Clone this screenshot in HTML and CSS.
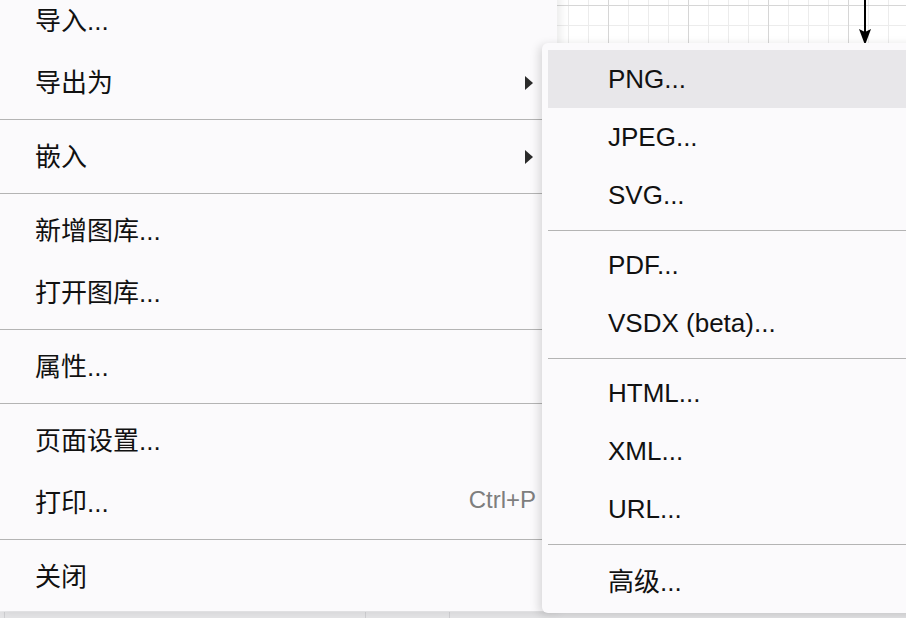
FILE: index.html
```html
<!DOCTYPE html>
<html lang="zh-CN">
<head>
<meta charset="utf-8">
<title>导出为</title>
<link rel="stylesheet" href="styles.css">
</head>
<body>
<div class="page">
  <div class="menu">
    <div class="item">导入...</div>
    <div class="item">导出为<span class="sub-arrow"></span></div>
    <div class="sep"></div>
    <div class="item">嵌入<span class="sub-arrow"></span></div>
    <div class="sep"></div>
    <div class="item">新增图库...</div>
    <div class="item">打开图库...</div>
    <div class="sep"></div>
    <div class="item">属性...</div>
    <div class="sep"></div>
    <div class="item">页面设置...</div>
    <div class="item">打印...<span class="shortcut">Ctrl+P</span></div>
    <div class="sep"></div>
    <div class="item">关闭</div>
  </div>
  <div class="footer">
    <div class="tab tab-a"></div>
    <div class="tab tab-b"></div>
    <div class="tab tab-c"></div>
  </div>
</div>

<svg class="edge-arrow" width="16" height="46" viewBox="0 0 16 46" aria-hidden="true">
  <line x1="7" y1="0" x2="7" y2="32" stroke="#000" stroke-width="2"/>
  <path d="M1 29 L7 45 L13 29 L7 32 Z" fill="#000"/>
</svg>

<div class="submenu">
  <div class="sitem hover">PNG...</div>
  <div class="sitem">JPEG...</div>
  <div class="sitem">SVG...</div>
  <div class="ssep"></div>
  <div class="sitem">PDF...</div>
  <div class="sitem">VSDX (beta)...</div>
  <div class="ssep"></div>
  <div class="sitem">HTML...</div>
  <div class="sitem">XML...</div>
  <div class="sitem">URL...</div>
  <div class="ssep"></div>
  <div class="sitem">高级...</div>
</div>
</body>
</html>
```

FILE: styles.css
```css
html, body {
  margin: 0;
  padding: 0;
}

body {
  width: 906px;
  height: 618px;
  overflow: hidden;
  position: relative;
  font-family: "Liberation Sans", "Noto Sans CJK SC", sans-serif;
  font-size: 26px;
  color: #111;
  background-color: #ffffff;
  background-image:
    linear-gradient(to right, #d6d6d6 1px, transparent 1px),
    linear-gradient(to bottom, #d6d6d6 1px, transparent 1px),
    linear-gradient(to right, #ececec 1px, transparent 1px),
    linear-gradient(to bottom, #ececec 1px, transparent 1px);
  background-size: 80px 80px, 80px 80px, 20px 20px, 20px 20px;
  background-position: 48px 5px, 48px 5px, 8px 5px, 8px 5px;
}

.page {
  display: flex;
  flex-direction: column;
  height: 618px;
}

.menu {
  width: 557px;
  margin-top: -10px;
  padding-bottom: 3px;
  background: #fbfafc;
  box-shadow: 2px 0 10px rgba(0, 0, 0, 0.10);
  display: flex;
  flex-direction: column;
  position: relative;
}

.item {
  height: 62px;
  box-sizing: border-box;
  display: flex;
  align-items: center;
  padding: 0 21px 6px 35px;
  white-space: nowrap;
}

.sub-arrow {
  margin-left: auto;
  margin-right: 3px;
  margin-top: 5px;
  width: 0;
  height: 0;
  border-left: 8px solid #2b2b2b;
  border-top: 7px solid transparent;
  border-bottom: 7px solid transparent;
}

.shortcut {
  margin-left: auto;
  color: #7e7e7e;
  font-size: 24px;
}

.sep {
  height: 1px;
  background: #b4b4b4;
  margin: 5px 0 6px;
}

.footer {
  flex: 1;
  display: flex;
  background: #e4e4e6;
  border-top: 1px solid #ececee;
}

.tab {
  border-right: 1px solid #cfcfd2;
}

.tab-a { width: 4px; }
.tab-b { width: 360px; }
.tab-c { width: 83px; }

.edge-arrow {
  position: absolute;
  left: 858px;
  top: 0;
}

.submenu {
  position: absolute;
  left: 542px;
  top: 43px;
  width: 380px;
  height: 570px;
  box-sizing: border-box;
  padding: 7px 0 0 6px;
  background: #fbfafc;
  border-radius: 6px 0 0 6px;
  box-shadow: -3px 2px 10px rgba(0, 0, 0, 0.14);
  display: flex;
  flex-direction: column;
}

.sitem {
  height: 58px;
  display: flex;
  align-items: center;
  padding-left: 60px;
  white-space: nowrap;
}

.sitem.hover {
  background: #e8e7ea;
}

.ssep {
  height: 1px;
  background: #b4b4b4;
  margin: 5.5px 0;
}
```
